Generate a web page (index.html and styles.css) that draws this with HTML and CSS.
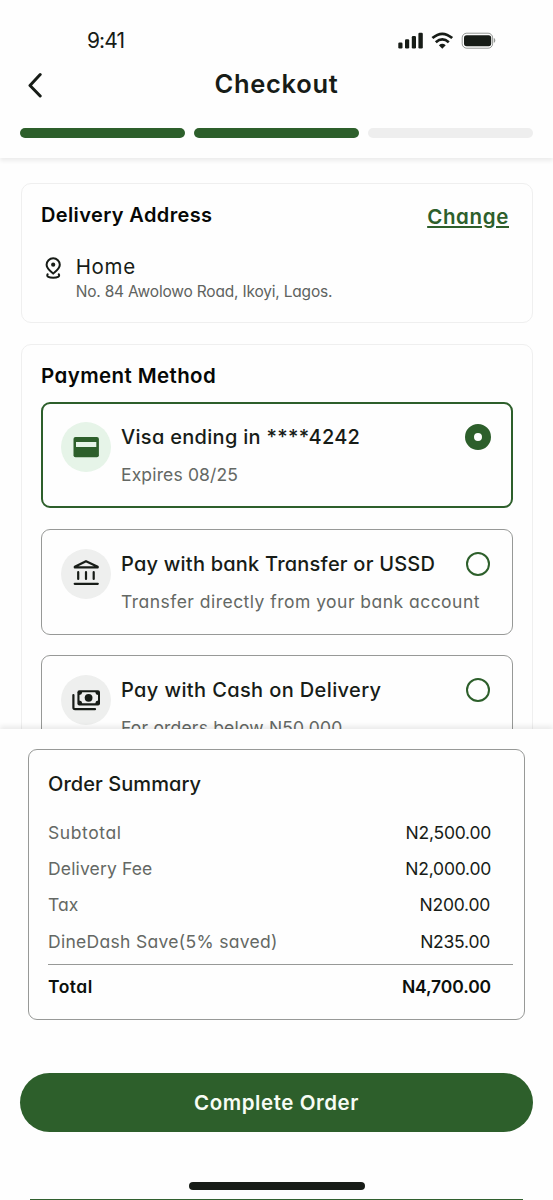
FILE: index.html
```html
<!DOCTYPE html>
<html lang="en">
<head>
<meta charset="utf-8">
<title>Checkout</title>
<link rel="stylesheet" href="styles.css">
</head>
<body>
<div class="screen">
  <header class="header">
    <div class="status">
      <span class="time">9:41</span>
      <svg class="status-icons" width="98" height="18" viewBox="0 0 98 18">
        <g fill="#171c17">
          <rect x="0.3" y="10.500" width="4.200" height="6" rx="1.2"/>
          <rect x="7" y="7.300" width="4.200" height="9.200" rx="1.2"/>
          <rect x="13.8" y="4" width="4.200" height="12.500" rx="1.2"/>
          <rect x="20.4" y="0.800" width="4.400" height="15.700" rx="1.2"/>
          <path d="M44.3 16.700 40.9 13.300Q44.3 10.400 47.7 13.300Z"/>
          <rect x="66" y="3.2" width="27.2" height="11" rx="2.6"/>
          <path d="M95.8 6.100q1.5.4 1.5 2.4t-1.5 2.4z" opacity=".45"/>
        </g>
        <g fill="none" stroke="#171c17" stroke-width="2.7">
          <path d="M34.4 6.100Q44.3-2.500 54.2 6.100"/>
          <path d="M37.8 10.200Q44.3 4.500 50.8 10.200"/>
        </g>
        <rect x="64.2" y="1.2" width="30.4" height="15" rx="4.5" fill="none" stroke="#171c17" stroke-opacity=".45"/>
      </svg>
    </div>
    <div class="titlebar">
      <svg class="back" width="16" height="26" viewBox="0 0 16 26"><path d="M13.2 2.500 3 13.500 13.2 24" fill="none" stroke="#171c17" stroke-width="3" stroke-linecap="round" stroke-linejoin="round"/></svg>
      <h1 class="title">Checkout</h1>
    </div>
    <div class="steps">
      <span class="step done"></span><span class="step done"></span><span class="step"></span>
    </div>
  </header>

  <main class="content">
    <section class="card address-card">
      <div class="card-head">
        <h2 class="heading delivery">Delivery Address</h2>
        <a class="change">Change</a>
      </div>
      <div class="address">
        <svg class="pin" width="18" height="24" viewBox="0 0 18 24">
          <g fill="none" stroke="#171c17" stroke-width="2" stroke-linecap="round" stroke-linejoin="round">
            <path d="M9.200 16.600C6.600 14.300 2.600 11.600 2.600 7.800a6.600 6.500 0 0 1 13.200 0C15.800 11.600 11.800 14.300 9.200 16.600Z"/>
            <path d="M3.700 17.200C2 19.600 5.200 20.700 9.200 20.700s7.200-1.100 5.500-3.500"/>
          </g>
          <circle cx="9.200" cy="7.700" r="2.100" fill="#171c17"/>
        </svg>
        <div>
          <div class="place">Home</div>
          <div class="street">No. 84 Awolowo Road, Ikoyi, Lagos.</div>
        </div>
      </div>
    </section>

    <section class="card payment-card">
      <h2 class="heading payment">Payment Method</h2>
      <div class="options">
        <div class="option selected">
          <svg class="badge" width="50" height="50" viewBox="0 0 50 50">
            <circle cx="25" cy="25" r="25" fill="#e6f4e8"/>
            <rect x="12.500" y="15" width="25.400" height="20.200" rx="2" fill="#2d5f2b"/>
            <rect x="15" y="20" width="20.300" height="5" fill="#e6f4e8"/>
          </svg>
          <div class="option-text">
            <div class="option-title visa">Visa ending in ****4242</div>
            <div class="option-sub expires">Expires 08/25</div>
          </div>
          <span class="radio checked"></span>
        </div>
        <div class="option">
          <svg class="badge" width="50" height="50" viewBox="0 0 50 50">
            <circle cx="25" cy="25" r="25" fill="#eeefee"/>
            <g fill="none" stroke="#171c17" stroke-width="2.200" stroke-linecap="round" stroke-linejoin="round">
              <path d="M13.800 18.400V17.800L25 12.200 36.700 17.800V18.400Z"/>
              <path d="M17.200 23.200V30M25 23.200V30M32.700 23.200V30M13.700 34.800H36.800"/>
            </g>
          </svg>
          <div class="option-text">
            <div class="option-title bank">Pay with bank Transfer or USSD</div>
            <div class="option-sub transfer">Transfer directly from your bank account</div>
          </div>
          <span class="radio"></span>
        </div>
        <div class="option">
          <svg class="badge" width="50" height="50" viewBox="0 0 50 50">
            <circle cx="25" cy="25" r="25" fill="#eeefee"/>
            <rect x="16.400" y="15.200" width="22.600" height="15.200" rx="2" fill="#171c17"/>
            <path d="M21.200 17.300H34.300A3 3 0 0 0 37 20V25.600A3 3 0 0 0 34.300 28.300H21.200A3 3 0 0 0 18.500 25.600V20A3 3 0 0 0 21.200 17.300Z" fill="#eeefee"/>
            <circle cx="27.600" cy="22.800" r="3.900" fill="#171c17"/>
            <path d="M12.400 20V32.500Q12.400 34.200 14.100 34.200H34" fill="none" stroke="#171c17" stroke-width="2.200" stroke-linecap="round"/>
          </svg>
          <div class="option-text">
            <div class="option-title cash">Pay with Cash on Delivery</div>
            <div class="option-sub below">For orders below N50,000</div>
          </div>
          <span class="radio"></span>
        </div>
      </div>
    </section>
  </main>

  <footer class="sheet">
    <section class="summary">
      <h2 class="summary-title">Order Summary</h2>
      <div class="line"><span class="label subtotal">Subtotal</span><span class="amount">N2,500.00</span></div>
      <div class="line"><span class="label fee">Delivery Fee</span><span class="amount">N2,000.00</span></div>
      <div class="line"><span class="label tax">Tax</span><span class="amount inset">N200.00</span></div>
      <div class="line"><span class="label save">DineDash Save(5% saved)</span><span class="amount inset">N235.00</span></div>
      <div class="line total"><span class="total-label">Total</span><span class="total-amount">N4,700.00</span></div>
    </section>
    <button class="complete">Complete Order</button>
    <div class="home-indicator"></div>
    <div class="next-edge"></div>
  </footer>
</div>
</body>
</html>
```
FILE: styles.css
```css
* { box-sizing: border-box; }
body {
  margin: 0;
  background: #fefefe;
  color: #171c17;
  font-family: "Inter", "Liberation Sans", sans-serif;
  font-feature-settings: "cv11";
}
h1, h2 { margin: 0; font-size: inherit; font-weight: inherit; }
.screen { height: 1200px; display: flex; flex-direction: column; overflow: hidden; }

.header { height: 158px; padding: 27px 20px 0; flex: none; box-shadow: 0 3px 4px rgba(0, 0, 0, .07); }
.status { height: 27px; padding: 0 37px 0 67px; display: flex; justify-content: space-between; align-items: center; }
.time { font-size: 21px; letter-spacing: -.900px; line-height: 25px; }
.titlebar { height: 62px; display: grid; grid-template-columns: 40px 1fr 40px; align-items: center; }
.back { margin-left: 7px; }
.title { font-size: 25.500px; line-height: 30px; margin-top: -2px; font-weight: 600; letter-spacing: .700px; text-align: center; }
.steps { margin-top: 12px; display: grid; grid-template-columns: repeat(3, 1fr); gap: 9.500px; }
.step { height: 10px; border-radius: 5px; background: #eee; }
.step.done { background: #2d5f2b; }

.content { flex: 1; min-height: 0; overflow: hidden; padding: 25px 20px 0 21px; display: flex; flex-direction: column; gap: 21px; }
.card { flex: none; border: 1px solid #efefef; border-radius: 10px; padding: 19px; }
.address-card { height: 140px; }
.payment-card { height: 460px; }
.heading { color: #060806; font-size: 20px; line-height: 24px; font-weight: 600; }
.delivery { letter-spacing: .370px; }
.payment { font-size: 20.500px; letter-spacing: .400px; }
.card-head { display: flex; justify-content: space-between; height: 24px; }
.change {
  margin: 2px 4px 0 0; line-height: 24px; color: #2d5f2b; font-size: 20.500px; font-weight: 600; letter-spacing: .650px;
  text-decoration: underline; text-decoration-thickness: 1.500px; text-underline-offset: 2px;
}
.address { margin-top: 26px; display: flex; gap: 13.700px; }
.pin { margin: 4px 0 0 3px; }
.place { font-size: 20.500px; line-height: 28px; letter-spacing: .700px; }
.street { font-size: 15.500px; line-height: 22px; letter-spacing: -.190px; color: #5f635f; }

.options { margin-top: 14px; display: flex; flex-direction: column; gap: 20.700px; }
.option { height: 106px; border: 1px solid #979997; border-radius: 9px; padding: 19px 22px 0 19px; display: flex; align-items: flex-start; }
.option.selected { border: 2px solid #2d5f2b; padding: 18px 20px 0 18px; }
.badge { flex: none; }
.option-text { flex: 1; min-width: 0; padding: 1px 0 0 10px; white-space: nowrap; }
.option-title { font-size: 20px; line-height: 29px; font-weight: 500; }
.option-sub { font-size: 17.500px; line-height: 24px; margin-top: 11px; color: #646864; }
.visa { letter-spacing: .300px; }
.bank { letter-spacing: .220px; }
.cash { letter-spacing: .380px; }
.expires { letter-spacing: .150px; }
.transfer { letter-spacing: .470px; }
.below { letter-spacing: .190px; }
.radio { width: 24px; height: 24px; border: 2px solid #2d5f2b; border-radius: 50%; margin-top: 3px; flex: none; }
.radio.checked { width: 26px; height: 26px; border-width: 9px; margin-top: 2px; }

.sheet { height: 471px; flex: none; padding: 20px 20px 0; background: #fefefe; box-shadow: 0 -3px 5px rgba(0, 0, 0, .08); display: flex; flex-direction: column; position: relative; }
.summary { height: 271px; margin: 0 8px; border: 1px solid #979997; border-radius: 9px; padding: 22px 11px 0 19px; }
.summary-title { font-size: 20px; line-height: 24px; font-weight: 500; letter-spacing: .070px; margin-bottom: 18px; }
.line { height: 36.400px; padding-right: 22px; display: flex; justify-content: space-between; align-items: center; font-size: 17.500px; }
.label { color: #646864; }
.subtotal { letter-spacing: .600px; }
.fee { letter-spacing: .150px; }
.tax { letter-spacing: .100px; }
.save { letter-spacing: .300px; }
.amount { letter-spacing: -.240px; }
.amount.inset { margin-right: 1px; }
.line.total { margin-top: 4px; border-top: 1px solid #979997; height: 45px; font-weight: 600; color: #0c100c; }
.total-label { letter-spacing: .500px; }
.total-amount { letter-spacing: -.120px; }
.complete {
  margin: 53px 0 0; height: 59px; flex: none; border: 0; border-radius: 30px; background: #2d5f2b; color: #f7fcf5;
  font: inherit; font-feature-settings: inherit; font-size: 20.500px; font-weight: 600; letter-spacing: .550px;
}
.home-indicator { width: 176px; height: 8px; margin: 50px auto 0; border-radius: 4px; background: #171c17; flex: none; }
.next-edge { height: 1px; margin: 9px 10px 0; background: #31602f; flex: none; }
```
